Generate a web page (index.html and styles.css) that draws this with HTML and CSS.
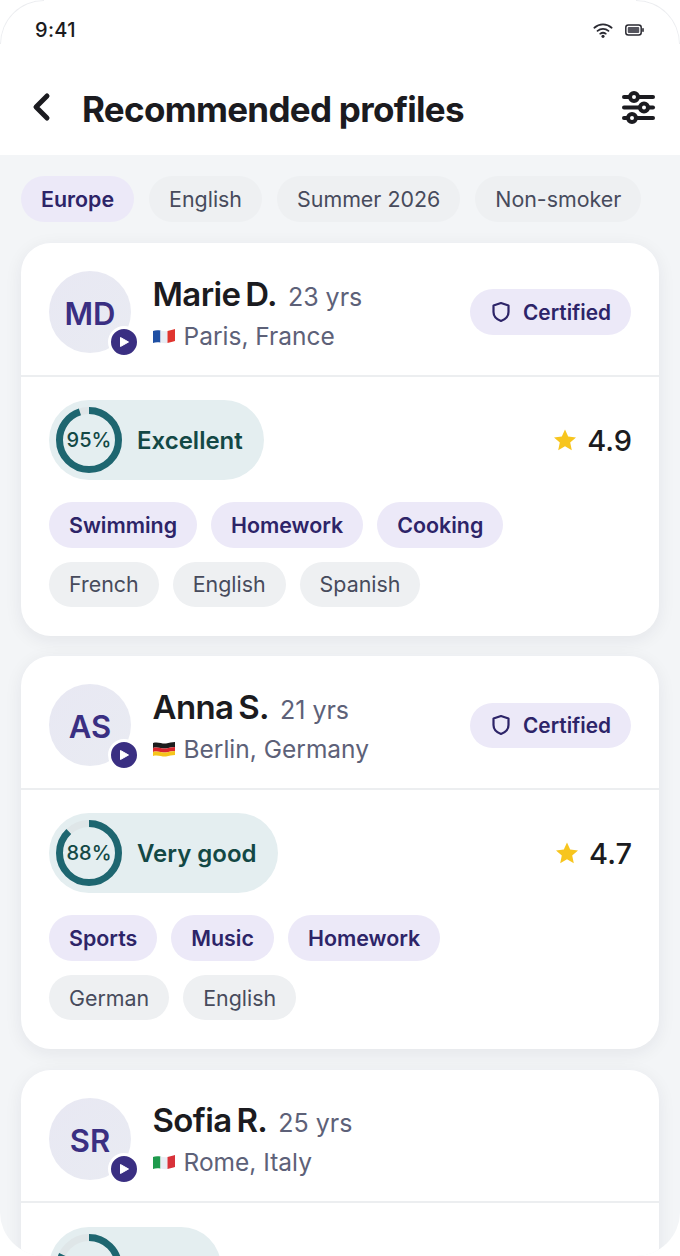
FILE: index.html
```html
<!DOCTYPE html>
<html lang="en">
<head>
  <meta charset="UTF-8" />
  <meta name="viewport" content="width=device-width, initial-scale=1.0" />
  <title>Recommended profiles</title>
  <link rel="stylesheet" href="styles.css">
</head>
<body>
  <div class="screen">
    <span class="corner corner-left"></span>
    <span class="corner corner-right"></span>
    <div class="top">
      <div class="status-bar">
        <span class="time">9:41</span>
        <div class="status-icons">
          <svg width="20" height="18" viewBox="0 0 22 18" fill="none" stroke="#2b2b33" stroke-width="2" stroke-linecap="round">
            <path d="M1.500 6.500C7 1.600 15 1.600 20.500 6.500"/>
            <path d="M5 10C8.500 7 13.500 7 17 10"/>
            <path d="M8 13C9.800 11.800 12.200 11.800 14 13"/>
            <circle cx="11" cy="16" r="1.700" fill="#2b2b33" stroke="none"/>
          </svg>
          <svg width="19" height="12" viewBox="0 0 19 12">
            <rect x="0.800" y="1" width="15.400" height="10" rx="2.500" fill="none" stroke="#2b2b33" stroke-width="1.500"/>
            <rect x="2.800" y="3" width="11.400" height="6" rx="1" fill="#55555e"/>
            <rect x="17.200" y="4" width="1.600" height="4" rx="0.800" fill="#2b2b33"/>
          </svg>
        </div>
      </div>
      <div class="app-bar">
        <svg class="back" width="22" height="30" viewBox="0 0 22 30" fill="none" stroke="#1b1b20" stroke-width="5" stroke-linecap="round" stroke-linejoin="round">
          <path d="M16 4L5 15L16 26"/>
        </svg>
        <h1>Recommended profiles</h1>
        <svg class="filter" width="34" height="34" viewBox="0 0 34 34" fill="none" stroke="#1b1b20" stroke-width="4" stroke-linecap="round">
          <path d="M2 7H31"/><path d="M2 17.500H31"/><path d="M2 28H31"/>
          <circle cx="12" cy="7" r="4" fill="#fff"/>
          <circle cx="22" cy="17.500" r="4" fill="#fff"/>
          <circle cx="10" cy="28" r="4" fill="#fff"/>
        </svg>
      </div>
    </div>

    <div class="content">
      <div class="filters">
        <span class="chip chip-on">Europe</span>
        <span class="chip">English</span>
        <span class="chip">Summer 2026</span>
        <span class="chip">Non-smoker</span>
      </div>

      <div class="card">
        <div class="card-head">
          <div class="avatar">MD
            <span class="play"><svg width="12" height="12" viewBox="0 0 12 12"><path d="M2.500 1.500L10.500 6L2.500 10.500Z" fill="#fff" stroke="#fff" stroke-linejoin="round"/></svg></span>
          </div>
          <div class="who">
            <div class="name-row"><span class="name">Marie D.</span><span class="age">23 yrs</span></div>
            <div class="place">
              <svg class="flag" width="22" height="16" viewBox="0 0 22 16">
                <path d="M0 3C2 2 5 2 7.500 2.500V14.500C5 14 2 14 0 15Z" fill="#1f4fa3"/>
                <path d="M7.500 2.500C9.500 3 12 3.500 14.500 3V15C12 15.500 9.500 15 7.500 14.500Z" fill="#e9edf4"/>
                <path d="M14.500 3C17 2.500 20 1.500 22 1V13C20 13.500 17 14.500 14.500 15Z" fill="#e0352f"/>
              </svg>
              Paris, France
            </div>
          </div>
          <div class="certified">
            <svg width="20" height="22" viewBox="0 0 20 22" fill="none" stroke="#2d2468" stroke-width="2.200" stroke-linejoin="round"><path d="M10 2L17.500 4.500V11C17.500 15.500 14 18.500 10 20C6 18.500 2.500 15.500 2.500 11V4.500Z"/></svg>
            Certified
          </div>
        </div>
        <div class="card-body">
          <div class="score-row">
            <div class="score">
              <div class="ring">
                <svg width="66" height="66" viewBox="0 0 66 66" fill="none" stroke-width="7">
                  <circle cx="33" cy="33" r="29.500" stroke="#dfe6e8"/>
                  <circle class="ring-fill" cx="33" cy="33" r="29.500" pathLength="100" stroke-dasharray="95 100"/>
                </svg>
                <span>95%</span>
              </div>
              <span class="score-label">Excellent</span>
            </div>
            <div class="rating">
              <svg width="24" height="24" viewBox="0 0 24 24"><path d="M12 1.500L15.200 8.600L23 9.400L17.200 14.600L18.800 22.200L12 18.300L5.200 22.200L6.800 14.600L1 9.400L8.800 8.600Z" fill="#f7c51e"/></svg>
              4.9
            </div>
          </div>
          <div class="tags">
            <span class="tag tag-skill">Swimming</span>
            <span class="tag tag-skill">Homework</span>
            <span class="tag tag-skill">Cooking</span>
          </div>
          <div class="tags">
            <span class="tag">French</span>
            <span class="tag">English</span>
            <span class="tag">Spanish</span>
          </div>
        </div>
      </div>

      <div class="card">
        <div class="card-head">
          <div class="avatar">AS
            <span class="play"><svg width="12" height="12" viewBox="0 0 12 12"><path d="M2.500 1.500L10.500 6L2.500 10.500Z" fill="#fff" stroke="#fff" stroke-linejoin="round"/></svg></span>
          </div>
          <div class="who">
            <div class="name-row"><span class="name">Anna S.</span><span class="age">21 yrs</span></div>
            <div class="place">
              <svg class="flag" width="22" height="16" viewBox="0 0 22 16">
                <path d="M0 2C5 0.500 9 3 13 2.500C16 2 19 1 22 1V6C19 6 16 7 13 7.500C9 8 5 5.500 0 7Z" fill="#1c1c1c"/>
                <path d="M0 7C5 5.500 9 8 13 7.500C16 7 19 6 22 6V10C19 10 16 11 13 11.500C9 12 5 9.500 0 11Z" fill="#d9272e"/>
                <path d="M0 11C5 9.500 9 12 13 11.500C16 11 19 10 22 10V14C19 14 16 15 13 15.500C9 16 5 13.500 0 15Z" fill="#f6c51b"/>
              </svg>
              Berlin, Germany
            </div>
          </div>
          <div class="certified">
            <svg width="20" height="22" viewBox="0 0 20 22" fill="none" stroke="#2d2468" stroke-width="2.200" stroke-linejoin="round"><path d="M10 2L17.500 4.500V11C17.500 15.500 14 18.500 10 20C6 18.500 2.500 15.500 2.500 11V4.500Z"/></svg>
            Certified
          </div>
        </div>
        <div class="card-body">
          <div class="score-row">
            <div class="score">
              <div class="ring">
                <svg width="66" height="66" viewBox="0 0 66 66" fill="none" stroke-width="7">
                  <circle cx="33" cy="33" r="29.500" stroke="#dfe6e8"/>
                  <circle class="ring-fill" cx="33" cy="33" r="29.500" pathLength="100" stroke-dasharray="88 100"/>
                </svg>
                <span>88%</span>
              </div>
              <span class="score-label">Very good</span>
            </div>
            <div class="rating">
              <svg width="24" height="24" viewBox="0 0 24 24"><path d="M12 1.500L15.200 8.600L23 9.400L17.200 14.600L18.800 22.200L12 18.300L5.200 22.200L6.800 14.600L1 9.400L8.800 8.600Z" fill="#f7c51e"/></svg>
              4.7
            </div>
          </div>
          <div class="tags">
            <span class="tag tag-skill">Sports</span>
            <span class="tag tag-skill">Music</span>
            <span class="tag tag-skill">Homework</span>
          </div>
          <div class="tags">
            <span class="tag">German</span>
            <span class="tag">English</span>
          </div>
        </div>
      </div>

      <div class="card">
        <div class="card-head">
          <div class="avatar">SR
            <span class="play"><svg width="12" height="12" viewBox="0 0 12 12"><path d="M2.500 1.500L10.500 6L2.500 10.500Z" fill="#fff" stroke="#fff" stroke-linejoin="round"/></svg></span>
          </div>
          <div class="who">
            <div class="name-row"><span class="name">Sofia R.</span><span class="age">25 yrs</span></div>
            <div class="place">
              <svg class="flag" width="22" height="16" viewBox="0 0 22 16">
                <path d="M0 3C2 2 5 2 7.500 2.500V14.500C5 14 2 14 0 15Z" fill="#1f9a4d"/>
                <path d="M7.500 2.500C9.500 3 12 3.500 14.500 3V15C12 15.500 9.500 15 7.500 14.500Z" fill="#e9edf4"/>
                <path d="M14.500 3C17 2.500 20 1.500 22 1V13C20 13.500 17 14.500 14.500 15Z" fill="#d8323a"/>
              </svg>
              Rome, Italy
            </div>
          </div>
        </div>
        <div class="card-body">
          <div class="score-row">
            <div class="score score-short">
              <div class="ring">
                <svg width="66" height="66" viewBox="0 0 66 66" fill="none" stroke-width="7">
                  <circle cx="33" cy="33" r="29.500" stroke="#dfe6e8"/>
                  <circle class="ring-fill" cx="33" cy="33" r="29.500" pathLength="100" stroke-dasharray="82 100"/>
                </svg>
              </div>
            </div>
          </div>
        </div>
      </div>
    </div>
  </div>
</body>
</html>
```

FILE: styles.css
```css
* {
  box-sizing: border-box;
}

html,
body {
  margin: 0;
  height: 100%;
  background-color: #fff;
}

body {
  font-family: "Inter", "Liberation Sans", sans-serif;
  color: #1b1b20;
  overflow: hidden;
}

.screen {
  position: relative;
  width: 680px;
  height: 1256px;
  overflow: hidden;
  background-color: #f3f5f7;
  border-radius: 44px;
}

/* faint outline of the phone corners */
.corner {
  position: absolute;
  top: 0;
  width: 44px;
  height: 44px;
  border-top: 1px solid #ecedf0;
  z-index: 2;
}

.corner-left {
  left: 0;
  border-left: 1px solid #ecedf0;
  border-top-left-radius: 44px;
}

.corner-right {
  right: 0;
  border-right: 1px solid #ecedf0;
  border-top-right-radius: 44px;
}

.top {
  background-color: #fff;
  height: 155px;
}

.status-bar {
  height: 60px;
  padding: 0 36px 0 35px;
  display: flex;
  align-items: center;
  justify-content: space-between;
}

.time {
  font-size: 20px;
  font-weight: 500;
  letter-spacing: 0.3px;
}

.status-icons {
  display: flex;
  align-items: center;
  gap: 12px;
}

.app-bar {
  display: flex;
  align-items: center;
  padding: 0 24px 0 31px;
  margin-top: 12px;
  height: 70px;
}

.back {
  margin-right: 29px;
}

h1 {
  flex: 1;
  margin: 3px 0 0;
  font-size: 35px;
  font-weight: 700;
  letter-spacing: -0.700px;
}

.content {
  padding: 21px 21px 0;
}

.filters {
  display: flex;
  gap: 15px;
  margin-bottom: 21.500px;
}

.chip {
  height: 45.500px;
  padding: 0 20px;
  border-radius: 23px;
  display: flex;
  align-items: center;
  background-color: #eef0f2;
  color: #474b5c;
  font-size: 21.400px;
}

.chip-on {
  background-color: #ece9f8;
  color: #2d2468;
  font-weight: 600;
}

.card {
  background-color: #fff;
  border-radius: 30px;
  margin-bottom: 20.900px;
  box-shadow: 0 4px 18px rgba(30, 35, 60, 0.07);
}

.card-head {
  height: 133.500px;
  padding: 28px 28px 21.500px;
  display: flex;
  align-items: center;
  border-bottom: 2px solid #eceef0;
}

.avatar {
  position: relative;
  width: 82px;
  height: 82px;
  margin-right: 21.500px;
  padding-top: 3px;
  border-radius: 50%;
  background: linear-gradient(135deg, #e8e8f3, #e9ebf2);
  color: #3a2f82;
  font-size: 31px;
  font-weight: 600;
  display: flex;
  align-items: center;
  justify-content: center;
}

.play {
  position: absolute;
  right: -9px;
  bottom: -5px;
  width: 32px;
  height: 32px;
  border-radius: 50%;
  background-color: #3a2f82;
  border: 3px solid #fff;
  display: flex;
  align-items: center;
  justify-content: center;
}

.who {
  flex: 1;
}

.name-row {
  display: flex;
  align-items: baseline;
  gap: 11px;
  margin-bottom: 7px;
}

.name {
  font-size: 33px;
  font-weight: 600;
  letter-spacing: -0.600px;
  word-spacing: -3px;
}

.age {
  font-size: 25px;
  color: #5d6178;
}

.place {
  display: flex;
  align-items: center;
  gap: 9px;
  font-size: 24.500px;
  color: #5d6178;
}

.certified {
  height: 45.500px;
  padding: 0 20px 0 21px;
  border-radius: 23px;
  display: flex;
  align-items: center;
  gap: 12px;
  background-color: #ece9f8;
  color: #2d2468;
  font-size: 20.800px;
  font-weight: 600;
}

.card-body {
  padding: 23.500px 28px 28.500px;
}

.score-row {
  display: flex;
  align-items: center;
  justify-content: space-between;
  margin-bottom: 22px;
}

.score {
  height: 80px;
  padding: 0 21px 0 7px;
  border-radius: 40px;
  display: flex;
  align-items: center;
  gap: 15px;
  background-color: #e4eef0;
}

.score-short {
  width: 172px;
}

.ring {
  position: relative;
  width: 66px;
  height: 66px;
  display: flex;
  align-items: center;
  justify-content: center;
  font-size: 20px;
  font-weight: 500;
  color: #134845;
}

.ring svg {
  position: absolute;
  left: 0;
  top: 0;
  transform: rotate(-90deg);
}

.ring-fill {
  stroke: #1e6670;
}

.score-label {
  font-size: 24px;
  font-weight: 600;
  color: #134845;
}

.rating {
  display: flex;
  align-items: center;
  gap: 10px;
  margin-right: -1px;
  font-size: 29px;
  font-weight: 500;
}

.tags {
  display: flex;
  gap: 14px;
  margin-bottom: 14px;
}

.tags:last-child {
  margin-bottom: 0;
}

.tag {
  height: 45.500px;
  padding: 0 20px;
  border-radius: 23px;
  display: flex;
  align-items: center;
  background-color: #eef0f2;
  color: #474b5c;
  font-size: 21.400px;
}

.tag-skill {
  background-color: #ece9f8;
  color: #2d2468;
  font-weight: 600;
}
```
